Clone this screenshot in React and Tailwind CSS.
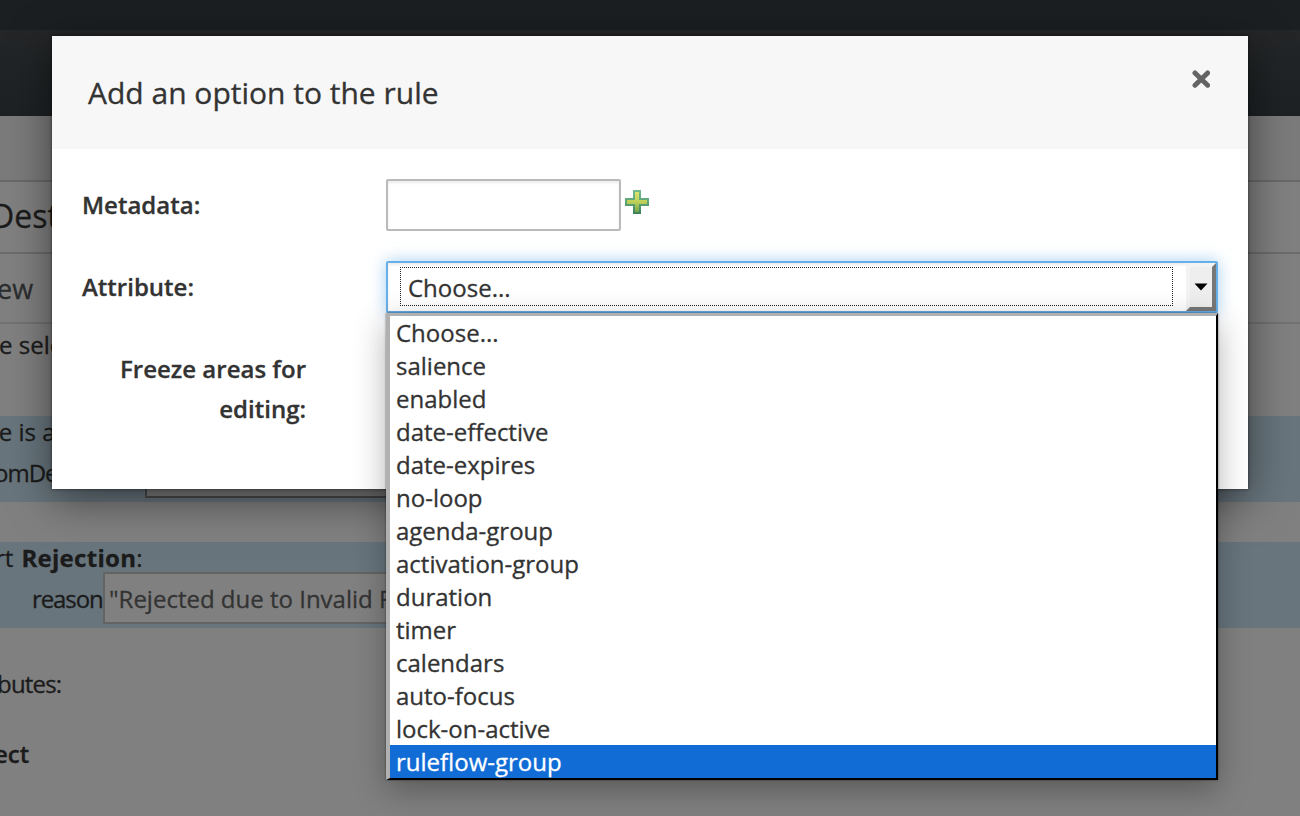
const options = [
  'Choose...', 'salience', 'enabled', 'date-effective', 'date-expires', 'no-loop', 'agenda-group',
  'activation-group', 'duration', 'timer', 'calendars', 'auto-focus', 'lock-on-active', 'ruleflow-group',
];

function PlusIcon() {
  return (
    <svg width="26" height="26" viewBox="0 0 26 26" className="block">
      <defs>
        <linearGradient id="edge" x1="0" y1="0" x2="0" y2="1">
          <stop offset="0" stopColor="#72bd8d" />
          <stop offset="0.6" stopColor="#5a9f74" />
          <stop offset="1" stopColor="#3d7f58" />
        </linearGradient>
        <linearGradient id="fill" x1="0" y1="0" x2="0" y2="1">
          <stop offset="0" stopColor="#dbe36c" />
          <stop offset="0.5" stopColor="#bdd058" />
          <stop offset="1" stopColor="#74a44b" />
        </linearGradient>
      </defs>
      <path d="M9 1h8v8h8v8h-8v8H9v-8H1V9h8z" fill="url(#edge)" />
      <path d="M11 3h4v8h8v4h-8v8h-4v-8H3v-4h8z" fill="url(#fill)" />
    </svg>
  );
}

function EditorPage() {
  return (
    <div className="flex h-[816px] flex-col bg-[#808080] text-[24px] leading-[40px] whitespace-nowrap text-[#1b1b1b]">
      <div className="h-[30px] shrink-0 bg-[#1b1f21]" />
      <div className="h-[86px] shrink-0 bg-linear-to-b from-[#242628] to-[#1d2123]" />
      <div className="h-[66px] shrink-0 border-b-2 border-[#696969] bg-[#7b7b7b]" />
      <div className="h-[72px] shrink-0 border-b-2 border-[#6c6c6c] pt-[14px]">
        <div className="-ml-[9px] text-[32px]">Dest</div>
      </div>
      <div className="h-[70px] shrink-0 border-b-2 border-[#727272] pt-[15px]">
        <div className="-ml-[3px] text-[27px] text-[#2b2d2f]">ew</div>
      </div>
      <div className="h-[92px] shrink-0 pt-[1px]">
        <div className="-ml-[1px]">e sele</div>
      </div>
      <div className="h-[86px] shrink-0 bg-[#68757d]">
        <div className="-ml-[11px] h-[38px] leading-[31px]">re is a</div>
        <div className="flex">
          <div className="-ml-[6px] w-[151px] leading-[37px] tracking-[-1px]">omDe</div>
          <div className="h-[44px] w-[400px] border-2 border-[#4b4b4b] bg-[#7d7d7d]" />
        </div>
      </div>
      <div className="h-[40px] shrink-0" />
      <div className="h-[86px] shrink-0 bg-[#68757d]">
        <div className="-ml-[5px] flex h-[30px] gap-[8px] leading-[31px]">
          <span>rt</span>
          <span><b className="tracking-[0.3px]">Rejection</b>:</span>
        </div>
        <div className="flex">
          <div className="w-[103px] pl-[32px] leading-[54px] tracking-[-1.1px]">reason</div>
          <div className="h-[52px] w-[400px] border-2 border-[#646464] bg-[#808080] pl-[4px] leading-[50px] text-[#333]">"Rejected due to Invalid F</div>
        </div>
      </div>
      <div className="pt-[36px]">
        <div className="-ml-[3px] tracking-[-0.8px]">butes:</div>
        <div className="-ml-[6px] pt-[30px] font-semibold">ect</div>
      </div>
    </div>
  );
}

function AttributeSelect() {
  return (
    <div className="relative h-[52px] w-[832px] rounded-[2px] border-2 border-[#66afe9] bg-white shadow-[0_0_16px_rgba(102,175,233,0.6)]">
      <div className="flex h-full justify-between shadow-[inset_0_2px_3px_rgba(0,0,0,0.08)]">
        <div className="mt-[4px] ml-[12px] flex h-[39px] w-[773px] items-center border border-dotted border-[#222] pt-[2px] pl-[7px]">Choose...</div>
        <div className="flex h-[48px] w-[30px] items-center justify-center border-4 border-t-[#f3f3f3] border-r-[#777] border-b-[#777] border-l-[#f3f3f3] bg-[#eee]">
          <svg width="14" height="8" viewBox="0 0 14 8" className="-mt-[1px] block"><path d="M.5 .5h13L7 7.5z" fill="#000" /></svg>
        </div>
      </div>
      <ul className="absolute top-[50px] -left-[2px] w-[832px] border-t-[3px] border-r-2 border-b-2 border-l-4 border-t-[#b0b0b0] border-r-black border-b-black border-l-[#b0b0b0] bg-white shadow-[0_10px_30px_rgba(0,0,0,0.3),0_0_2px_rgba(0,0,0,0.5)]">
        {options.map((o) => (
          <li key={o} className={o === 'ruleflow-group' ? 'h-[33px] bg-[#116cd6] pl-[6px] leading-[33px] text-white' : 'h-[33px] pl-[6px] leading-[33px]'}>{o}</li>
        ))}
      </ul>
    </div>
  );
}

export default function App() {
  return (
    <div className="relative h-[816px] w-[1300px] overflow-hidden font-['Open_Sans',sans-serif] [-webkit-text-stroke:0.3px]">
      <EditorPage />
      <div className="absolute top-[36px] left-[52px] h-[453px] w-[1196px] bg-white text-[24px] leading-[40px] text-[#333] shadow-[0_10px_40px_rgba(0,0,0,0.5),0_0_3px_rgba(0,0,0,0.5)]">
        <div className="flex h-[113px] justify-between bg-[#f7f7f7] pr-[38px] pl-[36px]">
          <h1 className="pt-[37px] text-[30px]">Add an option to the rule</h1>
          <svg width="18" height="18" viewBox="0 0 18 18" className="mt-[34px]"><path d="M3 3L15.6 15.2M15.6 3L3 15.2" stroke="#646464" strokeWidth="5" strokeLinecap="round" /></svg>
        </div>
        <div className="flex pt-[30px] pl-[30px]">
          <div className="w-[304px] pt-[6px] font-semibold">Metadata:</div>
          <div className="h-[52px] w-[235px] rounded-[2px] border-2 border-[#bababa] bg-white shadow-[inset_0_2px_3px_rgba(0,0,0,0.08)]" />
          <div className="mt-[10px] ml-[3px]"><PlusIcon /></div>
        </div>
        <div className="flex pt-[30px] pl-[30px]">
          <div className="w-[304px] pt-[6px] font-semibold">Attribute:</div>
          <AttributeSelect />
        </div>
        <div className="w-[254px] pt-[36px] text-right font-semibold">Freeze areas for<br />editing:</div>
      </div>
    </div>
  );
}
